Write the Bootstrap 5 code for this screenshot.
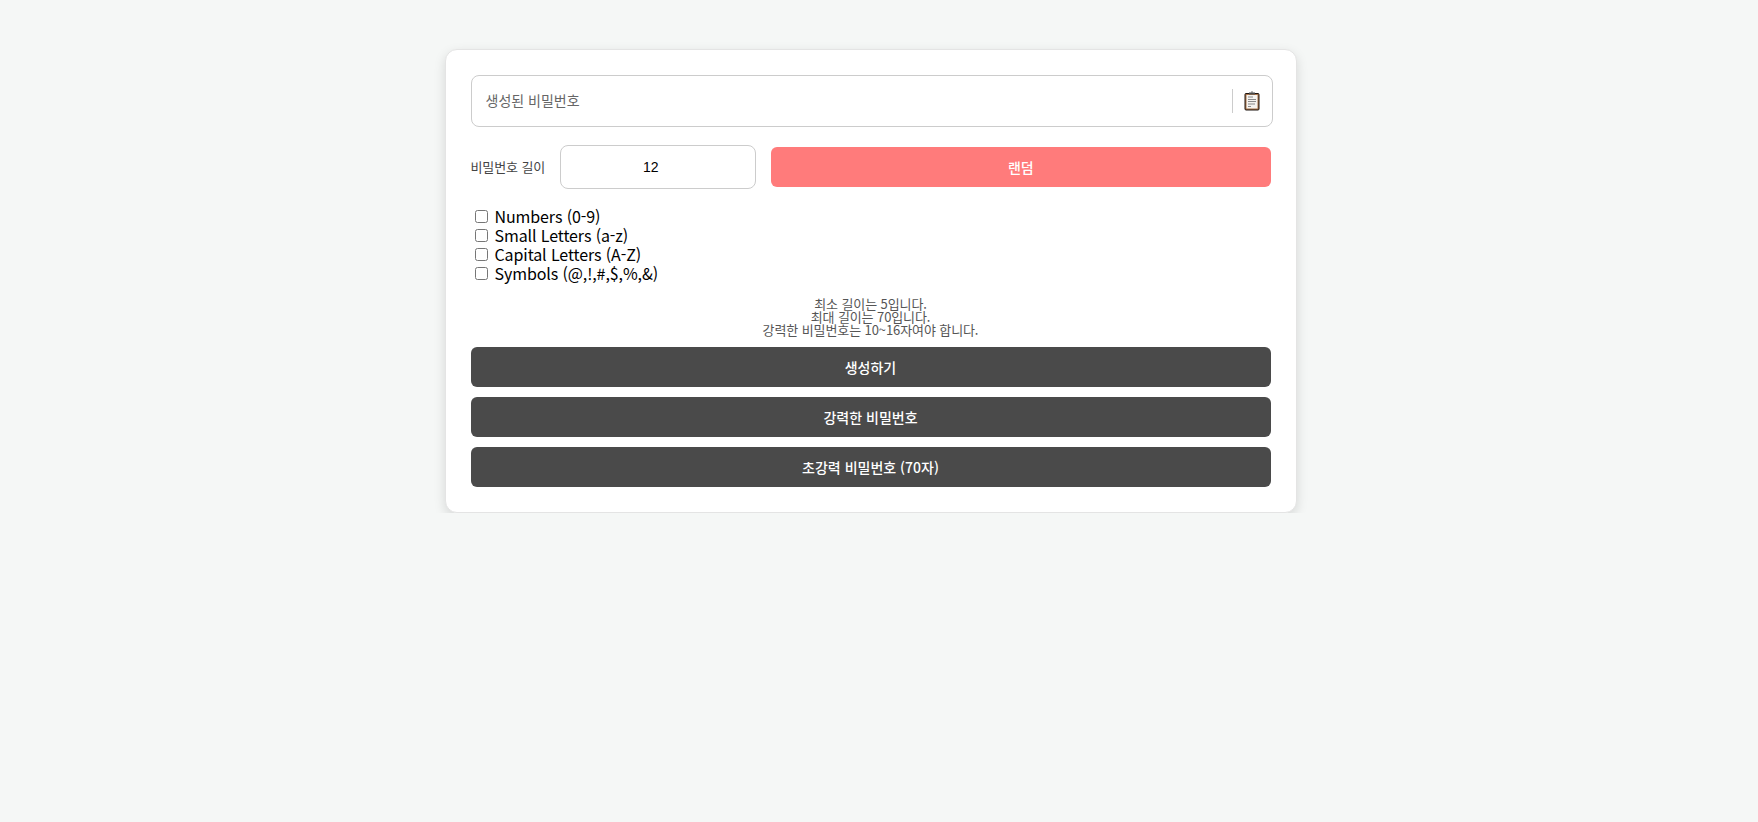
<!DOCTYPE html>
<html lang="ko">

<head>
    <meta charset="UTF-8">
    <meta name="viewport" content="width=device-width, initial-scale=1.0">
    <title>비밀번호 생성기</title>
    <link href="https://cdn.jsdelivr.net/npm/bootstrap@5.3.2/dist/css/bootstrap.min.css" rel="stylesheet">
    <style>
        body {
            font-family: "Noto Sans CJK KR", "Noto Sans", sans-serif;
            background-color: #f5f7f6;
            color: #000;
        }

        .page-wrap {
            padding: 49px 17px 0 0;
        }

        .gen-card {
            width: 852px;
            padding: 25px;
            border: 1px solid #e4e4e4;
            border-radius: 12px;
            box-shadow: 0 4px 12px rgba(0, 0, 0, .13);
        }

        .output-box {
            height: 52px;
            border: 1px solid #ccc;
            border-radius: 8px;
            padding: 0 12px 0 14px;
            margin-right: -2px;
        }

        .output-box input {
            font-size: 14px;
            color: #666;
            border: 0;
            outline: 0;
            padding: 0 0 2px;
        }

        .output-box input::placeholder {
            color: #666;
            opacity: 1;
        }

        .copy-btn {
            border: 0;
            border-left: 1px solid #ccc;
            background: none;
            height: 24px;
            padding: 0 0 0 11px;
        }

        .len-row {
            margin-top: 18px;
            gap: 15px;
        }

        .len-label {
            font-size: 13px;
            color: #444;
            letter-spacing: -.1px;
        }

        .len-input {
            width: 196px;
            height: 44px;
            border: 1px solid #ccc;
            border-radius: 8px;
            text-align: center;
            font-family: "Liberation Sans", sans-serif;
            font-size: 14px;
            outline: 0;
        }

        .act-btn {
            height: 40px;
            border: 0;
            border-radius: 6px;
            color: #fff;
            font-size: 14px;
            font-weight: 500;
        }

        .act-btn-random {
            background-color: #ff7b7b;
        }

        .act-btn-dark {
            background-color: #4a4a4a;
        }

        .btn-stack {
            margin-top: 11px;
            gap: 10px;
        }

        .opts {
            margin-top: 18px;
            padding-left: 4px;
            font-size: 16px;
            line-height: 19px;
            letter-spacing: -.1px;
        }

        .opts label {
            display: flex;
            align-items: center;
            gap: 7px;
        }

        .opts input {
            width: 13px;
            height: 13px;
            margin: 0;
        }

        .hint-text {
            margin-top: 14px;
            font-size: 13px;
            line-height: 13px;
            color: #555;
            letter-spacing: -.1px;
        }
    </style>
</head>

<body>
    <div class="page-wrap d-flex justify-content-center">
        <div class="gen-card bg-white">
            <div class="output-box d-flex align-items-center">
                <input type="text" class="flex-grow-1" placeholder="생성된 비밀번호" readonly>
                <button type="button" class="copy-btn d-flex align-items-center" aria-label="복사">
                    <svg width="16" height="20" viewBox="0 0 16 20">
                        <rect x="1" y="2.5" width="14" height="16.5" rx="1" fill="#a9744a" stroke="#1c1410" stroke-width="1"/>
                        <rect x="2.5" y="4" width="11" height="13.5" fill="#f5f3f0"/>
                        <rect x="5" y="1.5" width="6" height="2" fill="#4a4a4a"/>
                        <rect x="7" y="0.5" width="2" height="1.2" fill="#777"/>
                        <path d="M4 6h5M4 8.5h8M4 10.5h8M4 13h7M4 15.5h3" stroke="#8a8a8a" stroke-width="1.1" fill="none"/>
                    </svg>
                </button>
            </div>

            <div class="len-row d-flex align-items-center">
                <label class="len-label" for="pw-length">비밀번호 길이</label>
                <input type="number" id="pw-length" class="len-input" value="12">
                <button type="button" class="act-btn act-btn-random flex-grow-1">랜덤</button>
            </div>

            <div class="opts">
                <label><input type="checkbox">Numbers (0-9)</label>
                <label><input type="checkbox">Small Letters (a-z)</label>
                <label><input type="checkbox">Capital Letters (A-Z)</label>
                <label><input type="checkbox">Symbols (@,!,#,$,%,&amp;)</label>
            </div>

            <div class="hint-text text-center">
                최소 길이는 5입니다.<br>
                최대 길이는 70입니다.<br>
                강력한 비밀번호는 10~16자여야 합니다.
            </div>

            <div class="btn-stack d-grid">
                <button type="button" class="act-btn act-btn-dark">생성하기</button>
                <button type="button" class="act-btn act-btn-dark">강력한 비밀번호</button>
                <button type="button" class="act-btn act-btn-dark">초강력 비밀번호 (70자)</button>
            </div>
        </div>
    </div>

    <script src="https://cdn.jsdelivr.net/npm/bootstrap@5.3.2/dist/js/bootstrap.bundle.min.js"></script>
</body>

</html>
